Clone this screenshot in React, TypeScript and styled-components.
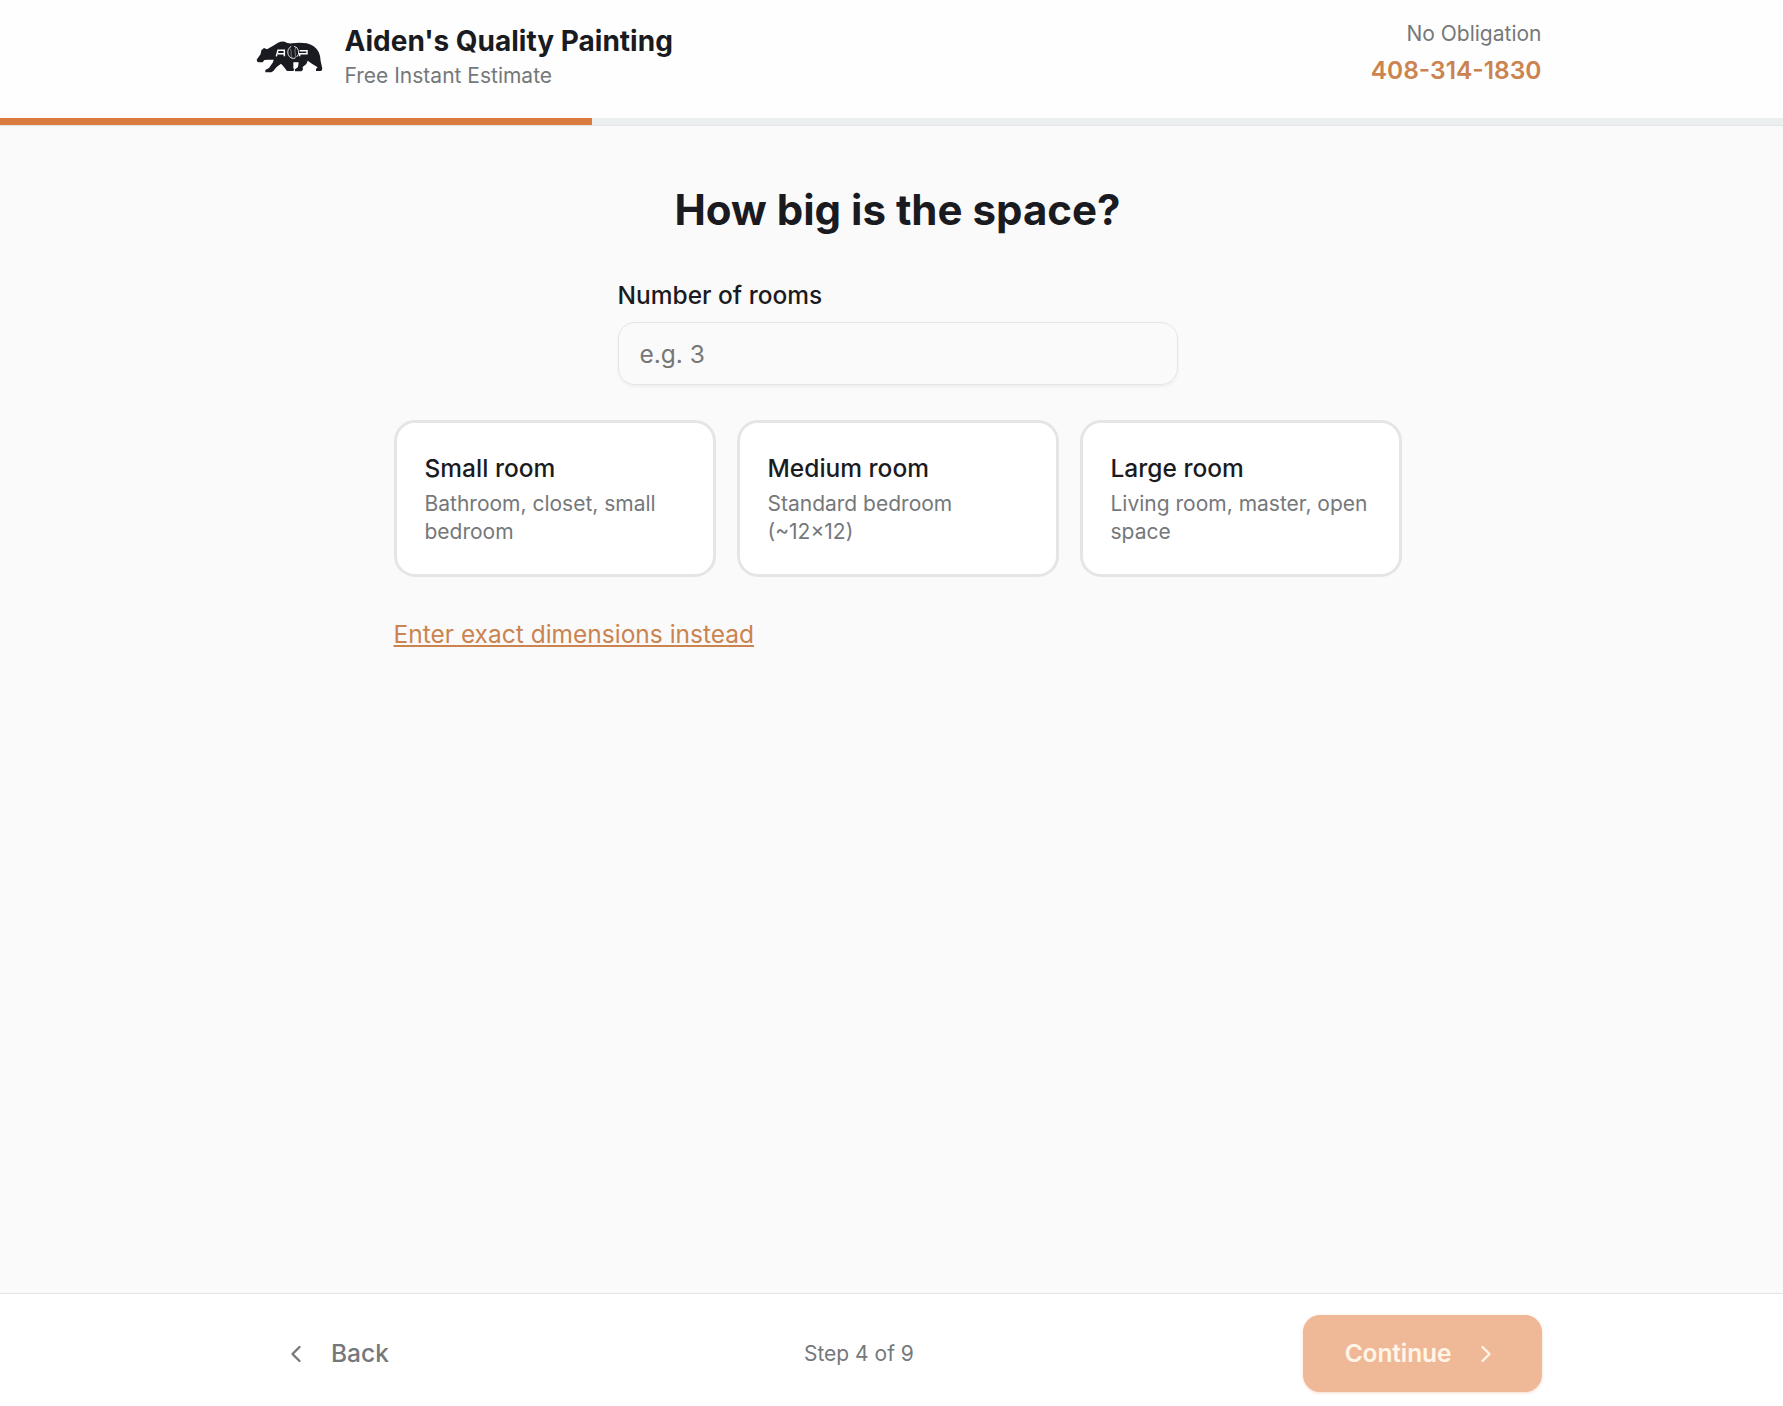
import React from "react";
import styled, { createGlobalStyle } from "styled-components";
import { ChevronLeft, ChevronRight } from "lucide-react";

const colors = {
  ink: "#1a1b21",
  muted: "#75787a",
  primary: "#d97b3f",
  link: "#cb8350",
  border: "#e3e6e5",
  page: "#fafafa",
};

const rooms = [
  { title: "Small room", desc: "Bathroom, closet, small bedroom" },
  { title: "Medium room", desc: "Standard bedroom (~12×12)" },
  { title: "Large room", desc: "Living room, master, open space" },
];

export default function App() {
  return (
    <>
      <GlobalStyle />
      <Page>
        <Header>
          <HeaderInner>
            <Brand>
              <BearLogo />
              <div>
                <BrandName>Aiden's Quality Painting</BrandName>
                <BrandSub>Free Instant Estimate</BrandSub>
              </div>
            </Brand>
            <Contact>
              <ContactNote>No Obligation</ContactNote>
              <Phone href="tel:4083141830">408-314-1830</Phone>
            </Contact>
          </HeaderInner>
          <ProgressTrack>
            <ProgressBar />
          </ProgressTrack>
        </Header>
        <Main>
          <Heading>How big is the space?</Heading>
          <Field>
            <Label htmlFor="rooms">Number of rooms</Label>
            <Input id="rooms" placeholder="e.g. 3" />
          </Field>
          <RoomGrid>
            {rooms.map((room) => (
              <RoomCard key={room.title}>
                <RoomTitle>{room.title}</RoomTitle>
                <RoomDesc>{room.desc}</RoomDesc>
              </RoomCard>
            ))}
          </RoomGrid>
          <ExactLink>Enter exact dimensions instead</ExactLink>
        </Main>
        <Footer>
          <FooterInner>
            <BackButton>
              <ChevronLeft size={28} strokeWidth={2} />
              <ButtonText>Back</ButtonText>
            </BackButton>
            <Step>Step 4 of 9</Step>
            <ContinueButton disabled>
              <ButtonText>Continue</ButtonText>
              <ChevronRight size={28} strokeWidth={2} />
            </ContinueButton>
          </FooterInner>
        </Footer>
      </Page>
    </>
  );
}

function BearLogo() {
  return (
    <Logo viewBox="46 122 201 96" aria-label="AQP">
      <path
        fill={colors.ink}
        d="M48 178L60 161L62 150L70 143L79 147L95 138L112 127Q121 123 132 124Q142 131 154 129Q176 126 198 129Q222 134 234 155Q239 165 240 182L245 205L242 212H226V206L231 201L215 191L201 181L197 191L186 200L187 208L182 213H163V207L172 200L174 186H158V204L161 207L158 212H139L128 198L121 190L108 200L98 212L92 216H74V209L85 203L97 186L99 178H82L71 179L66 186H54L50 184Z"
      />
      <g fill="none" stroke="#fff">
        <path d="M107 168L112 150H131V168M112 160H131" strokeWidth="4.5" />
        <path d="M152 138A16 18 0 1 0 164 173M160 138A16 18 0 0 1 168 170" strokeWidth="2.5" />
        <path d="M147 145C156 150 147 164 155 174M165 141C159 156 168 160 163 173" strokeWidth="1.2" />
        <path d="M177 168V160H199V151H177" strokeWidth="4.5" />
      </g>
    </Logo>
  );
}

const GlobalStyle = createGlobalStyle`
  * {
    box-sizing: border-box;
  }
  body {
    margin: 0;
    background: ${colors.page};
    color: ${colors.ink};
    font-family: Inter, sans-serif;
  }
  button, input {
    font-family: inherit;
  }
`;

const Page = styled.div`
  height: 1406px;
  display: flex;
  flex-direction: column;
`;

const Header = styled.header`
  height: 126px;
  background: #fefefe;
  border-bottom: 1px solid ${colors.border};
`;

const HeaderInner = styled.div`
  width: 1286px;
  height: 118px;
  margin: 0 auto 0 255.5px;
  padding-top: 17px;
  display: flex;
  justify-content: space-between;
`;

const Brand = styled.div`
  display: flex;
  gap: 22px;
`;

const Logo = styled.svg`
  width: 67px;
  height: 32px;
  margin-top: 24px;
`;

const BrandName = styled.div`
  font-size: 28px;
  font-weight: 700;
  line-height: 48px;
`;

const BrandSub = styled.div`
  font-size: 21px;
  line-height: 28px;
  margin-top: -3px;
  color: ${colors.muted};
`;

const Contact = styled.div`
  text-align: right;
`;

const ContactNote = styled.div`
  font-size: 21px;
  line-height: 28px;
  margin-top: 3px;
  color: ${colors.muted};
`;

const Phone = styled.a`
  display: block;
  font-size: 24.5px;
  line-height: 36px;
  margin-top: 4px;
  font-weight: 600;
  color: ${colors.link};
  text-decoration: none;
`;

const ProgressTrack = styled.div`
  height: 7px;
  background: #ebefef;
`;

const ProgressBar = styled.div`
  width: 592px;
  height: 100%;
  background: ${colors.primary};
`;

const Main = styled.main`
  flex: 1;
  width: 1008px;
  margin-left: 393.5px;
`;

const Heading = styled.h1`
  margin: 56px 0 0;
  font-size: 42px;
  font-weight: 700;
  line-height: 56px;
  text-align: center;
`;

const Field = styled.div`
  width: 560px;
  margin: 39px auto 0;
`;

const Label = styled.label`
  display: block;
  font-size: 24.5px;
  font-weight: 500;
  line-height: 36px;
`;

const Input = styled.input`
  display: block;
  width: 100%;
  height: 63px;
  margin-top: 9px;
  padding: 0 21px;
  border: 1px solid ${colors.border};
  border-radius: 17px;
  background: transparent;
  box-shadow: 0 2px 3px rgba(0, 0, 0, 0.05);
  font-size: 24.5px;
  outline: none;

  &::placeholder {
    color: #777;
    opacity: 1;
  }
`;

const RoomGrid = styled.div`
  display: grid;
  grid-template-columns: repeat(3, 1fr);
  gap: 21px;
  margin-top: 35px;
`;

const RoomCard = styled.button`
  height: 157px;
  padding: 0 27px 1px 28px;
  border: 3px solid ${colors.border};
  border-radius: 21px;
  background: #fff;
  color: ${colors.ink};
  text-align: left;
`;

const RoomTitle = styled.div`
  font-size: 24.5px;
  font-weight: 500;
  line-height: 35px;
`;

const RoomDesc = styled.div`
  font-size: 21px;
  line-height: 28px;
  margin-top: 4px;
  color: ${colors.muted};
`;

const ExactLink = styled.button`
  display: block;
  margin-top: 39px;
  padding: 0;
  border: 0;
  background: none;
  color: ${colors.link};
  font-size: 24.5px;
  line-height: 36px;
  text-decoration: underline;
`;

const Footer = styled.footer`
  height: 113px;
  background: #fff;
  border-top: 1px solid ${colors.border};
`;

const FooterInner = styled.div`
  width: 1286px;
  margin-left: 256px;
  padding-top: 21px;
  display: flex;
  justify-content: space-between;
  align-items: center;
`;

const BackButton = styled.button`
  display: flex;
  align-items: center;
  gap: 21px;
  padding: 0 26px;
  border: 0;
  background: none;
  color: ${colors.muted};
  font-size: 24.5px;
  font-weight: 500;
`;

const ButtonText = styled.span`
  padding-bottom: 2px;
`;

const Step = styled.span`
  color: ${colors.muted};
  font-size: 21px;
`;

const ContinueButton = styled.button`
  display: flex;
  align-items: center;
  justify-content: center;
  gap: 21px;
  width: 239px;
  height: 77px;
  padding: 0;
  border: 0;
  border-radius: 17px;
  background: #efb998;
  box-shadow: 0 1px 3px rgba(239, 185, 152, 0.5);
  color: #fff6e8;
  font-size: 24.5px;
  font-weight: 600;
  letter-spacing: -0.1px;
`;
